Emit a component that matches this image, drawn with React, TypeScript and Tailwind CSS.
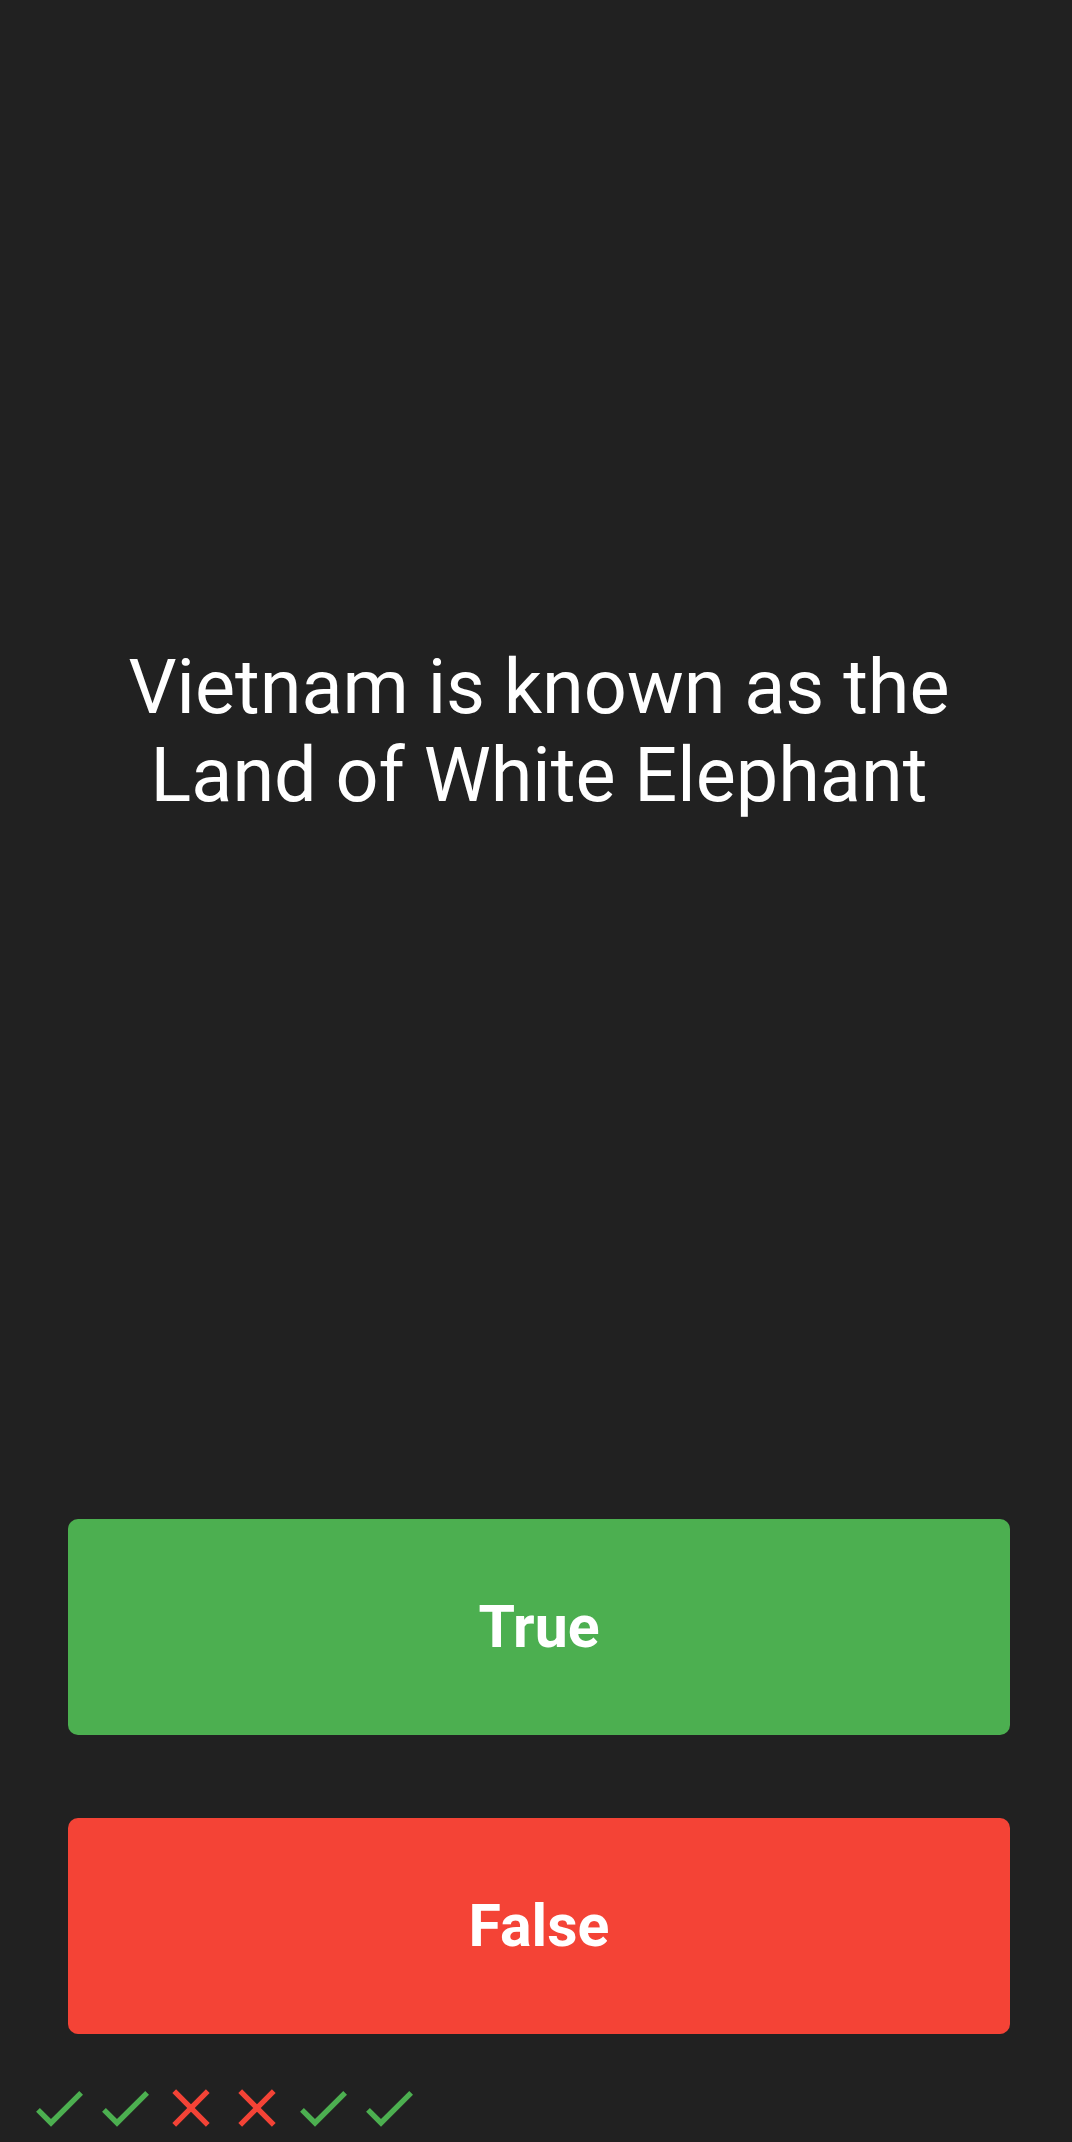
import React from "react";

const Check = () => (
  <svg viewBox="0 0 24 24" className="w-[64px] h-[64px]" fill="#4CAF50">
    <path d="M9 16.17L4.83 12l-1.42 1.41L9 19 21 7l-1.41-1.41z" />
  </svg>
);

const Cross = () => (
  <svg viewBox="0 0 24 24" className="w-[64px] h-[64px]" fill="#F44336">
    <path d="M19 6.41L17.59 5 12 10.59 6.41 5 5 6.41 10.59 12 5 17.59 6.41 19 12 13.41 17.59 19 19 17.59 13.41 12z" />
  </svg>
);

export default function App() {
  const results = [true, true, false, false, true, true];
  return (
    <div
      className="w-[1072px] h-[2142px] bg-[#212121] flex flex-col overflow-hidden"
      style={{ fontFamily: "Roboto, 'Noto Sans', sans-serif" }}
    >
      <div className="h-[1462px] flex items-center justify-center pl-[68px] pr-[62px]">
        <p className="text-white text-[75.6px] leading-[88px] text-center">
          Vietnam is known as the
          <br />
          Land of White Elephant
        </p>
      </div>
      <div className="mt-[57px] pl-[68px] pr-[62px] flex flex-col gap-[83px]">
        <button className="h-[216px] w-full rounded-[10px] bg-[#4CAF50] text-white text-[59px] font-bold flex items-center justify-center">
          True
        </button>
        <button className="h-[216px] w-full rounded-[10px] bg-[#F44336] text-white text-[59px] font-bold flex items-center justify-center">
          False
        </button>
      </div>
      <div className="mt-[42px] pl-[27px] flex flex-row gap-[2px]">
        {results.map((r, i) => (r ? <Check key={i} /> : <Cross key={i} />))}
      </div>
    </div>
  );
}
